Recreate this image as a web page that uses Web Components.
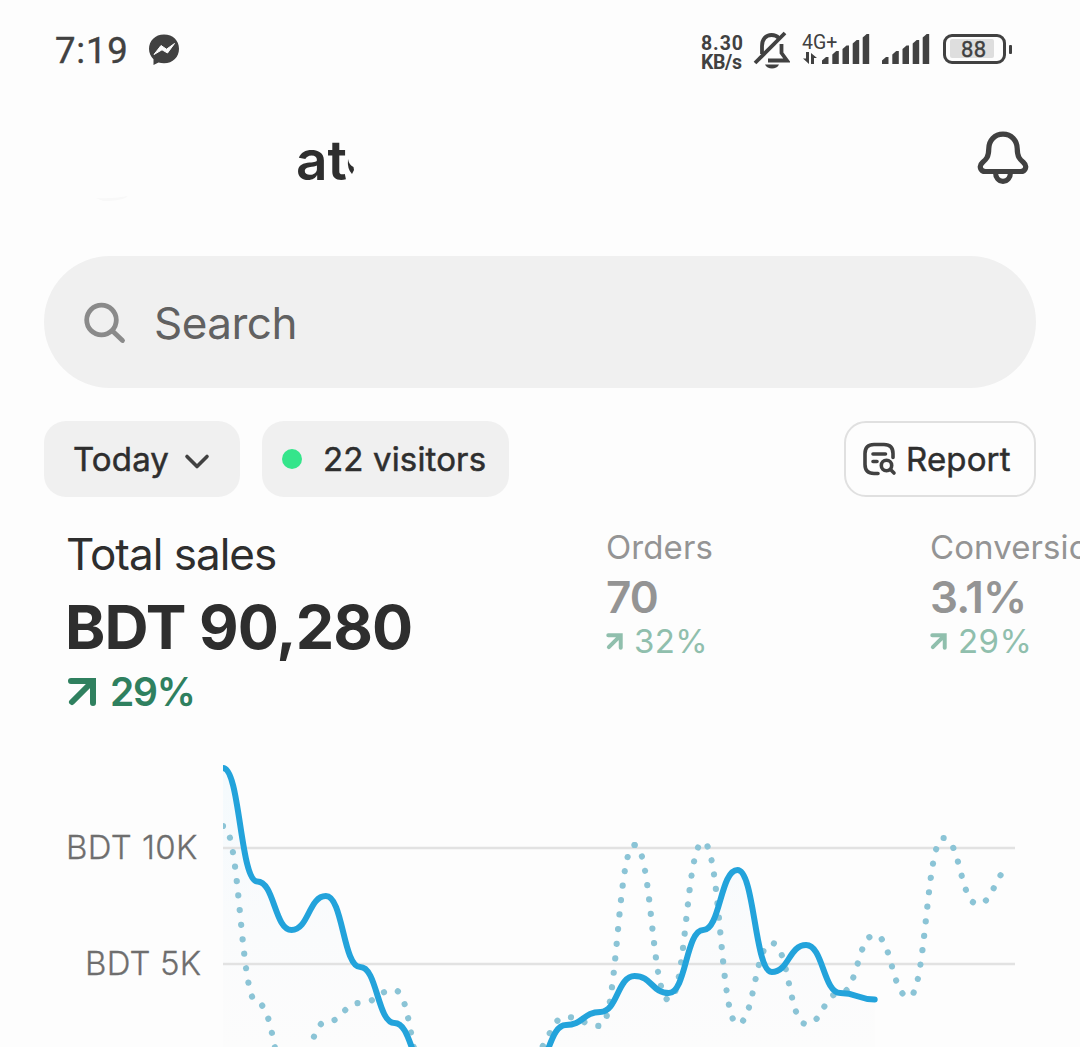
<!DOCTYPE html>
<html lang="en">
<head>
<meta charset="utf-8">
<title>Store dashboard</title>
<style>
  html, body {
    margin: 0;
    background: #fdfdfd;
  }
  body {
    width: 1080px;
    height: 1047px;
    overflow: hidden;
    font-family: Inter, "Liberation Sans", sans-serif;
    color: #2e2e2e;
  }
</style>
</head>
<body>
<store-dashboard></store-dashboard>

<script>
/** Attach an open shadow root and fill it with markup */
function render(host, html) {
  host.attachShadow({ mode: 'open' }).innerHTML = html;
}

/**
 * StatusBar - phone clock, notifications, network and battery
 */
class StatusBar extends HTMLElement {
  constructor() {
    super();
    const bars = [[0, 24], [10.3, 18], [20.5, 12.5], [30.7, 7], [40.7, 1]]
      .map(([x, y]) => `<path d="M${x} 31V${y + 3.5}L${x + 4} ${y}H${x + 6.5}V31Z"/>`).join('');

    render(this, `
      <style>
        :host {
          display: flex;
          box-sizing: border-box;
          height: 100px;
          padding: 0 68px 0 55px;
          align-items: center;
          font-family: Roboto, sans-serif;
          color: #414141;
        }
        svg { display: block; flex: none; }
        .time { font-size: 36.5px; letter-spacing: 0.8px; width: 93px; -webkit-text-stroke: 0.4px; }
        .speed {
          margin-left: auto;
          width: 43px;
          padding-top: 5px;
          font-size: 19.5px;
          font-weight: 700;
          line-height: 19px;
          letter-spacing: -0.4px;
          white-space: nowrap;
        }
        .speed div:first-child { letter-spacing: 0.9px; }
        .muted { margin-left: 9px; }
        .net { display: flex; width: 68px; margin-left: 12px; height: 34px; }
        .gen { width: 20px; font-size: 19.5px; line-height: 19px; white-space: nowrap; }
        .gen svg { margin-top: 0; }
        .second { margin-left: 12px; }
        .battery { display: flex; align-items: center; margin: -2px 0 0 13px; }
        .cell {
          box-sizing: border-box;
          width: 63px;
          height: 30px;
          border: 3.5px solid #414141;
          border-radius: 9px;
          padding: 2px 9px 2px 4px;
        }
        .level {
          height: 19px;
          background: #dedede;
          font-size: 22px;
          -webkit-text-stroke: 0.4px;
          line-height: 21px;
          letter-spacing: 0.3px;
          text-indent: 11px;
          border-radius: 2px;
        }
        .tip { width: 3px; height: 9px; margin-left: 3px; background: #414141; border-radius: 1px; }
      </style>
      <div class="time">7:19</div>
      <svg width="32" height="32" viewBox="0 0 32 32">
        <path fill="#414141" d="M16 .5C7.100.5 1 6.800 1 14.800c0 4.200 1.700 7.800 4.500 10.500V31l5-2.500c1.700.5 3.500.8 5.500.8 9 0 15-6.300 15-14.500S25 .5 16 .5Z"/>
        <path fill="#fdfdfd" d="M6 20.500L13 11.500L18.500 15.200L26.500 9.500L19.500 19L14 15.800Z" stroke="#fdfdfd" stroke-width="1" stroke-linejoin="round"/>
      </svg>
      <div class="speed"><div>8.30</div><div>KB/s</div></div>
      <svg class="muted" width="37" height="40" viewBox="0 0 37 40" fill="none" stroke="#414141" stroke-width="3.800">
        <path d="M9 24V16C9 9 13 5 18.500 5c3 0 5.500 1 7.200 3M28.500 14v9l5.500 7.500H15"/>
        <path d="M2 33L32 3"/>
        <path fill="#414141" stroke="none" d="M12 34.500h14c-1 2.500-4 4-7 4s-6-1.500-7-4Z"/>
      </svg>
      <div class="net">
        <div class="gen">4G+
          <svg width="18" height="13" viewBox="0 0 18 13" fill="#414141">
            <path d="M4 0h3v12L1 6.500h3ZM9 12V1l6 5h-3v6Z"/>
          </svg>
        </div>
        <svg width="48" height="34" viewBox="0 0 48 34" fill="#414141">${bars}</svg>
      </div>
      <svg class="second" width="48" height="34" viewBox="0 0 48 34" fill="#414141">${bars}</svg>
      <div class="battery">
        <div class="cell"><div class="level">88</div></div>
        <div class="tip"></div>
      </div>
    `);
  }
}

/**
 * StoreHeader - store name and the notification bell
 */
class StoreHeader extends HTMLElement {
  constructor() {
    super();
    render(this, `
      <style>
        :host {
          display: flex;
          box-sizing: border-box;
          height: 156px;
          padding: 0 51px 0 95px;
          align-items: flex-start;
        }
        svg { display: block; }
        .avatar { margin-top: 94px; width: 201px; }
        .name { font-size: 55px; font-weight: 600; line-height: 60px; margin-top: 30px; }
        .cut { margin-top: 57px; margin-left: -1px; }
        .bell { margin: 29px 0 0 auto; }
      </style>
      <svg class="avatar" width="201" height="10" viewBox="0 0 201 10">
        <path fill="#f8f8f8" d="M1 4Q17 5 33 2Q28 7 8 7Z"/>
      </svg>
      <div class="name"><slot></slot></div>
      <svg class="cut" width="9" height="20" viewBox="0 0 9 20">
        <path fill="#2e2e2e" d="M2 2Q3 8 7.500 10L8 13L6 17Q1 12 2 2Z"/>
      </svg>
      <svg class="bell" width="52" height="58" viewBox="0 0 52 58" fill="none" stroke="#414141" stroke-width="5.200" stroke-linejoin="round">
        <path d="M26 5.200c-8.500 0-14 6.300-14.200 14.200C11.600 28 9.500 30 5.500 33.500 1.500 37 3.300 42.500 8.500 42.500h35c5.200 0 7-5.500 3-9C42.500 30 40.400 28 40.200 19.400 40 11.500 34.500 5.200 26 5.200Z"/>
        <path d="M18.500 43c0 5.500 3 9.300 7.500 9.300s7.500-3.800 7.500-9.300"/>
      </svg>
    `);
  }
}

/**
 * SearchField - rounded search box
 */
class SearchField extends HTMLElement {
  constructor() {
    super();
    render(this, `
      <style>
        :host {
          display: flex;
          box-sizing: border-box;
          height: 132px;
          margin: 0 44px;
          padding-left: 38px;
          border-radius: 66px;
          background: #f0f0f0;
          align-items: center;
          font-size: 44px;
          letter-spacing: -0.5px;
          color: #616161;
        }
        svg { margin-right: 28px; }
        span { line-height: 60px; margin-top: 2px; }
      </style>
      <svg width="44" height="44" viewBox="0 0 44 44" fill="none" stroke="#8a8a8a" stroke-width="4.800" stroke-linecap="round">
        <circle cx="19.500" cy="20" r="14.800"/>
        <path d="M30.500 31L40.500 40.500"/>
      </svg>
      <span><slot></slot></span>
    `);
  }
}

/**
 * PillButton - small rounded button, filled or outlined
 */
class PillButton extends HTMLElement {
  constructor() {
    super();
    render(this, `
      <style>
        :host {
          display: flex;
          box-sizing: border-box;
          height: 76px;
          border-radius: 22px;
          background: #f0f0f0;
          align-items: center;
          font-size: 33px;
          -webkit-text-stroke: 0.5px;
          letter-spacing: 0.15px;
          white-space: nowrap;
        }
        :host([outline]) {
          background: #fdfdfd;
          border: 2px solid #e0e0e0;
        }
        ::slotted(svg) { display: block; flex: none; }
      </style>
      <slot></slot>
    `);
  }
}

/**
 * MetricItem - label, value and percent change
 */
class MetricItem extends HTMLElement {
  constructor() {
    super();
    render(this, `
      <style>
        :host { display: block; white-space: nowrap; color: #949494; }
        .label { font-size: 33px; line-height: 38px; letter-spacing: 0.1px; }
        .value { font-size: 44px; line-height: 62px; font-weight: 600; letter-spacing: -0.9px; }
        .change {
          display: flex;
          align-items: center;
          font-size: 33px;
          line-height: 26px;
          color: #90bfad;
          letter-spacing: 0.4px;
        }
        svg { width: 17px; height: 17px; margin-right: 11px; stroke-width: 7; }
        :host([main]) { color: #2e2e2e; }
        :host([main]) .label { font-size: 44px; line-height: 52px; letter-spacing: -1px; margin-left: -1px; }
        :host([main]) .value { font-size: 61px; line-height: 94px; font-weight: 700; letter-spacing: -0.9px; margin-left: -2px; }
        :host([main]) .change { font-size: 39px; line-height: 35px; font-weight: 600; color: #2f805f; letter-spacing: -1.2px; }
        :host([main]) svg { width: 30px; height: 30px; margin-right: 13px; stroke-width: 6; }
      </style>
      <div class="label"><slot name="label"></slot></div>
      <div class="value"><slot name="value"></slot></div>
      <div class="change">
        <svg viewBox="0 0 30 30" fill="none" stroke="currentColor" stroke-linecap="round">
          <path d="M4 4H26V26M25 5L5 25"/>
        </svg>
        <slot name="change"></slot>
      </div>
    `);
  }
}

/**
 * SalesChart - today's sales against the previous period
 */
class SalesChart extends HTMLElement {
  constructor() {
    super();
    const step = 34.3;
    const today = [768, 881.5, 930, 896, 967, 1023, 1071, 1090, 1090, 1069,
      1025, 1012, 976, 993, 930, 870, 972, 945, 993, 999.5];
    const before = [826, 1003, 1087, 1022, 1003, 990, 1082, 1090, 1090, 1053,
      1017, 1026, 845, 1000, 842, 1024, 943, 1024, 993, 935, 997, 838, 904, 868];

    // Each hour is joined to the next by a curve that is flat at both ends
    const line = (values, from, to) => {
      const dir = to > from ? 1 : -1;
      let d = `M${223 + from * step} ${values[from]}`;
      for (let i = from + dir; i !== to + dir; i += dir) {
        const x = 223 + i * step;
        const mid = x - dir * step / 2;
        d += `C${mid} ${values[i - dir]} ${mid} ${values[i]} ${x} ${values[i]}`;
      }
      return d;
    };

    render(this, `
      <style>
        :host { display: flex; height: 307px; }
        .axis {
          box-sizing: border-box;
          width: 223px;
          padding-top: 49px;
          font-size: 33px;
          line-height: 116px;
          color: #6e6e6e;
          font-weight: 300;
          -webkit-text-stroke: 0.3px;
          letter-spacing: 0.4px;
          white-space: nowrap;
        }
        .axis div { padding-left: 66px; }
        .axis div + div { padding-left: 85px; letter-spacing: 0.2px; }
        svg { display: block; }
      </style>
      <div class="axis"><div>BDT 10K</div><div>BDT 5K</div></div>
      <svg width="857" height="307" viewBox="223 740 857 307" fill="none">
        <defs>
          <linearGradient id="fade" gradientUnits="userSpaceOnUse" x1="0" y1="768" x2="0" y2="1047">
            <stop offset="0" stop-color="#f4fafd"/>
            <stop offset="0.600" stop-color="#fafbfc"/>
            <stop offset="1" stop-color="#fcfcfc"/>
          </linearGradient>
        </defs>
        <path fill="url(#fade)" d="${line(today, 0, 19)}V1100H223Z"/>
        <path stroke="#e2e2e2" stroke-width="2.500" d="M223 848H1015M223 964H1015"/>
        <g stroke="#8bc4d6" stroke-width="6.200" stroke-linecap="round" stroke-dasharray="0.010 14.550">
          <path d="${line(before, 0, 7)}"/>
          <path d="${line(before, 12, 8)}"/>
          <path stroke-dasharray="0.010 14.500" d="${line(before, 12, 23)}"/>
        </g>
        <path stroke="#23a3db" stroke-width="6" stroke-linecap="round" d="${line(today, 0, 19)}"/>
      </svg>
    `);
  }
}

/**
 * StoreDashboard - the whole home screen
 */
class StoreDashboard extends HTMLElement {
  constructor() {
    super();
    render(this, `
      <style>
        :host { display: block; width: 1080px; height: 1047px; overflow: hidden; }
        .filters { display: flex; margin: 33px 44px 0; gap: 22px; }
        .today { width: 196px; padding-left: 29px; }
        .today svg { margin: 6px 0 0 14px; }
        .visitors { width: 247px; padding-left: 20px; }
        .dot { width: 20px; height: 20px; border-radius: 50%; background: #35e58b; margin-right: 21px; }
        .report { width: 192px; margin-left: auto; padding-left: 16px; }
        .report svg { margin-right: 9px; }
        .metrics {
          display: grid;
          grid-template-columns: 539px 324px 200px;
          margin: 31px 0 0 67px;
          height: 212px;
          width: 1063px;
        }
      </style>
      <status-bar></status-bar>
      <store-header>at</store-header>
      <search-field>Search</search-field>
      <div class="filters">
        <pill-button class="today">Today
          <svg width="28" height="18" viewBox="0 0 28 18" fill="none" stroke="#414141" stroke-width="3.600" stroke-linecap="round" stroke-linejoin="round">
            <path d="M4 3.500L14 13.500L24 3.500"/>
          </svg>
        </pill-button>
        <pill-button class="visitors"><span class="dot"></span>22 visitors</pill-button>
        <pill-button class="report" outline>
          <svg width="35" height="34" viewBox="0 0 35 34" fill="none" stroke="#414141" stroke-width="3.600" stroke-linecap="round" stroke-linejoin="round">
            <path d="M16 31.500H12Q3 31.500 3 22.500V11.500Q3 2.500 12 2.500H22Q31 2.500 31 11.500V15.500"/>
            <path d="M11 12H23.500M11 19.500H15"/>
            <circle cx="24.500" cy="23.500" r="5.200"/>
            <path d="M28.500 27.500L32 31"/>
          </svg>Report</pill-button>
      </div>
      <div class="metrics">
        <metric-item main>
          <span slot="label">Total sales</span>
          <span slot="value">BDT 90,280</span>
          <span slot="change">29%</span>
        </metric-item>
        <metric-item>
          <span slot="label">Orders</span>
          <span slot="value">70</span>
          <span slot="change">32%</span>
        </metric-item>
        <metric-item>
          <span slot="label">Conversion</span>
          <span slot="value">3.1%</span>
          <span slot="change">29%</span>
        </metric-item>
      </div>
      <sales-chart></sales-chart>
    `);
  }
}

customElements.define('status-bar', StatusBar);
customElements.define('store-header', StoreHeader);
customElements.define('search-field', SearchField);
customElements.define('pill-button', PillButton);
customElements.define('metric-item', MetricItem);
customElements.define('sales-chart', SalesChart);
customElements.define('store-dashboard', StoreDashboard);
</script>
</body>
</html>
